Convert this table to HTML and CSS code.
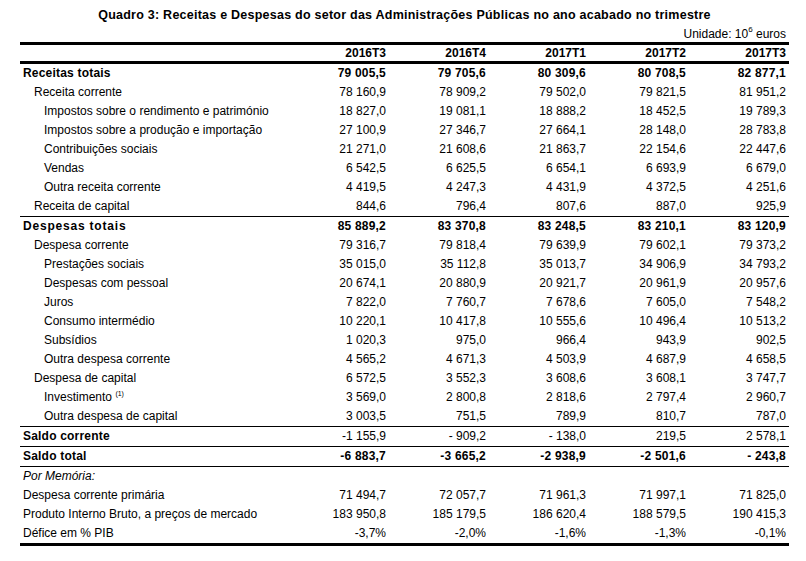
FILE: index.html
```html
<!DOCTYPE html>
<html lang="pt">
<head>
<meta charset="utf-8">
<title>Quadro 3</title>
<link rel="stylesheet" href="styles.css">
</head>
<body>
<div class="page">
  <h1 class="title">Quadro 3: Receitas e Despesas do setor das Administrações Públicas no ano acabado no trimestre</h1>
  <div class="unit">Unidade: 10<sup>6</sup> euros</div>
  <table class="tbl">
    <colgroup>
      <col class="c-label"><col class="c-num"><col class="c-num"><col class="c-num"><col class="c-num"><col class="c-num">
    </colgroup>
    <thead>
      <tr><th></th><th>2016T3</th><th>2016T4</th><th>2017T1</th><th>2017T2</th><th>2017T3</th></tr>
    </thead>
    <tbody>
      <tr class="bold"><td class="l0">Receitas totais</td><td>79 005,5</td><td>79 705,6</td><td>80 309,6</td><td>80 708,5</td><td>82 877,1</td></tr>
      <tr><td class="l1">Receita corrente</td><td>78 160,9</td><td>78 909,2</td><td>79 502,0</td><td>79 821,5</td><td>81 951,2</td></tr>
      <tr><td class="l2">Impostos sobre o rendimento e património</td><td>18 827,0</td><td>19 081,1</td><td>18 888,2</td><td>18 452,5</td><td>19 789,3</td></tr>
      <tr><td class="l2">Impostos sobre a produção e importação</td><td>27 100,9</td><td>27 346,7</td><td>27 664,1</td><td>28 148,0</td><td>28 783,8</td></tr>
      <tr><td class="l2">Contribuições sociais</td><td>21 271,0</td><td>21 608,6</td><td>21 863,7</td><td>22 154,6</td><td>22 447,6</td></tr>
      <tr><td class="l2">Vendas</td><td>6 542,5</td><td>6 625,5</td><td>6 654,1</td><td>6 693,9</td><td>6 679,0</td></tr>
      <tr><td class="l2">Outra receita corrente</td><td>4 419,5</td><td>4 247,3</td><td>4 431,9</td><td>4 372,5</td><td>4 251,6</td></tr>
      <tr><td class="l1">Receita de capital</td><td>844,6</td><td>796,4</td><td>807,6</td><td>887,0</td><td>925,9</td></tr>
      <tr class="bold rule"><td class="l0 spaced">Despesas totais</td><td>85 889,2</td><td>83 370,8</td><td>83 248,5</td><td>83 210,1</td><td>83 120,9</td></tr>
      <tr><td class="l1">Despesa corrente</td><td>79 316,7</td><td>79 818,4</td><td>79 639,9</td><td>79 602,1</td><td>79 373,2</td></tr>
      <tr><td class="l2">Prestações sociais</td><td>35 015,0</td><td>35 112,8</td><td>35 013,7</td><td>34 906,9</td><td>34 793,2</td></tr>
      <tr><td class="l2">Despesas com pessoal</td><td>20 674,1</td><td>20 880,9</td><td>20 921,7</td><td>20 961,9</td><td>20 957,6</td></tr>
      <tr><td class="l2">Juros</td><td>7 822,0</td><td>7 760,7</td><td>7 678,6</td><td>7 605,0</td><td>7 548,2</td></tr>
      <tr><td class="l2">Consumo intermédio</td><td>10 220,1</td><td>10 417,8</td><td>10 555,6</td><td>10 496,4</td><td>10 513,2</td></tr>
      <tr><td class="l2">Subsídios</td><td>1 020,3</td><td>975,0</td><td>966,4</td><td>943,9</td><td>902,5</td></tr>
      <tr><td class="l2">Outra despesa corrente</td><td>4 565,2</td><td>4 671,3</td><td>4 503,9</td><td>4 687,9</td><td>4 658,5</td></tr>
      <tr><td class="l1">Despesa de capital</td><td>6 572,5</td><td>3 552,3</td><td>3 608,6</td><td>3 608,1</td><td>3 747,7</td></tr>
      <tr><td class="l2">Investimento <sup class="note">(1)</sup></td><td>3 569,0</td><td>2 800,8</td><td>2 818,6</td><td>2 797,4</td><td>2 960,7</td></tr>
      <tr><td class="l2">Outra despesa de capital</td><td>3 003,5</td><td>751,5</td><td>789,9</td><td>810,7</td><td>787,0</td></tr>
      <tr class="rule"><td class="l0 strong">Saldo corrente</td><td>-1 155,9</td><td>- 909,2</td><td>- 138,0</td><td>219,5</td><td>2 578,1</td></tr>
      <tr class="bold rule"><td class="l0">Saldo total</td><td>-6 883,7</td><td>-3 665,2</td><td>-2 938,9</td><td>-2 501,6</td><td>- 243,8</td></tr>
      <tr class="rule"><td class="l0 memo">Por Memória:</td><td></td><td></td><td></td><td></td><td></td></tr>
      <tr><td class="l0">Despesa corrente primária</td><td>71 494,7</td><td>72 057,7</td><td>71 961,3</td><td>71 997,1</td><td>71 825,0</td></tr>
      <tr><td class="l0">Produto Interno Bruto, a preços de mercado</td><td>183 950,8</td><td>185 179,5</td><td>186 620,4</td><td>188 579,5</td><td>190 415,3</td></tr>
      <tr class="last"><td class="l0">Défice em % PIB</td><td>-3,7%</td><td>-2,0%</td><td>-1,6%</td><td>-1,3%</td><td>-0,1%</td></tr>
    </tbody>
  </table>
</div>
</body>
</html>
```

FILE: styles.css
```css
html, body {
  margin: 0;
  padding: 0;
  background: #ffffff;
}
body {
  font-family: "Liberation Sans", Arial, Helvetica, sans-serif;
  color: #000;
}
.page {
  width: 769px;
  margin-left: 20px;
}
.title {
  margin: 0;
  padding-top: 8px;
  font-size: 12.5px;
  line-height: 14px;
  font-weight: bold;
  text-align: center;
  letter-spacing: 0.24px;
}
.unit {
  font-size: 12px;
  line-height: 16px;
  height: 20px;
  text-align: right;
  padding-right: 3px;
  padding-top: 4px;
  box-sizing: border-box;
}
.unit sup {
  font-size: 8px;
  vertical-align: 6px;
  line-height: 0;
}
.tbl {
  width: 769px;
  table-layout: fixed;
  border-collapse: separate;
  border-spacing: 0;
  font-size: 12px;
}
.c-label { width: 269px; }
.c-num { width: 100px; }
.tbl th {
  height: 16px;
  padding: 0 3px 0 0;
  line-height: 16px;
  text-align: right;
  font-weight: bold;
  border-top: 3px solid #000;
  border-bottom: 3px solid #000;
}
.tbl td {
  height: 19px;
  padding: 0 3px 0 0;
  line-height: 19px;
  text-align: right;
  white-space: nowrap;
}
.tbl td.l0, .tbl td.l1, .tbl td.l2 {
  text-align: left;
}
.tbl td.l0 { padding-left: 3px; }
.tbl td.l1 { padding-left: 14px; }
.tbl td.l2 { padding-left: 24px; }
.bold td { font-weight: bold; letter-spacing: 0.2px; }
.tbl td.spaced { letter-spacing: 0.8px; }
.tbl td.strong { font-weight: bold; letter-spacing: 0.2px; }
.tbl td.memo { font-style: italic; }
.rule td { border-top: 1px solid #000; }
.last td { border-bottom: 3px solid #000; }
.note {
  font-size: 7px;
  vertical-align: 5px;
  line-height: 0;
}
```
